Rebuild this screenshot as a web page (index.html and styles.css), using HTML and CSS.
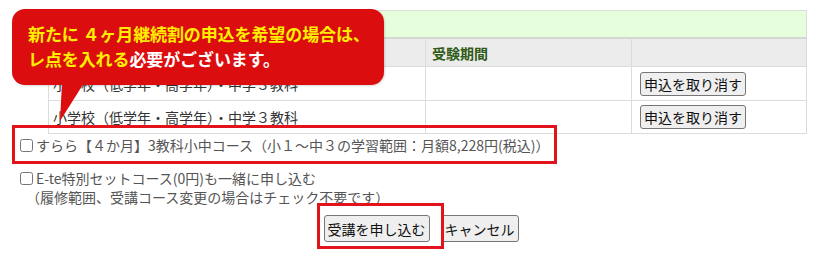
FILE: index.html
```html
<!DOCTYPE html>
<html lang="ja">
<head>
<meta charset="utf-8">
<link rel="stylesheet" href="styles.css">
</head>
<body>
<div class="page">
  <table class="courses">
    <colgroup><col class="c1"><col class="c2"><col class="c3"></colgroup>
    <tr class="r-title"><td colspan="3"></td></tr>
    <tr class="r-head"><th></th><th>受験期間</th><th></th></tr>
    <tr class="r-a"><td>小学校（低学年・高学年）・中学３教科</td><td></td><td><button class="btn">申込を取り消す</button></td></tr>
    <tr class="r-b"><td>小学校（低学年・高学年）・中学３教科</td><td></td><td><button class="btn">申込を取り消す</button></td></tr>
  </table>

  <label class="opt opt1"><input type="checkbox"><span>すらら【４か月】3教科小中コース（小１～中３の学習範囲：月額8,228円(税込)）</span></label>

  <div class="opt2">
    <label class="opt"><input type="checkbox"><span>E-te特別セットコース(0円)も一緒に申し込む</span></label>
    <div class="note">（履修範囲、受講コース変更の場合はチェック不要です）</div>
  </div>

  <div class="actions">
    <button class="btn btn-lg">受講を申し込む</button>
    <button class="btn btn-lg">キャンセル</button>
  </div>

  <div class="mark mark-opt"></div>
  <div class="mark mark-submit"></div>

  <div class="callout">
    <div class="callout-text"><span class="hl">新たに ４ヶ月継続割の申込を希望の場合は、</span><br><span class="hl">レ点を入れる</span>必要がございます。</div>
  </div>
</div>
</body>
</html>
```

FILE: styles.css
```css
html, body {
  margin: 0;
  padding: 0;
  background: #fff;
}
body {
  font-family: "Noto Sans CJK JP", "Noto Sans", sans-serif;
  font-size: 14px;
  color: #333;
}
.page {
  position: relative;
  width: 840px;
  height: 254px;
  padding-top: 10px;
  box-sizing: border-box;
}
.courses {
  margin-left: 48px;
  width: 758px;
  border-collapse: collapse;
  table-layout: fixed;
  border: 1px solid #dcdcdc;
}
.courses col.c1 { width: 377px; }
.courses col.c2 { width: 206px; }
.courses col.c3 { width: 175px; }
.courses td, .courses th {
  border: 1px solid #dcdcdc;
  padding: 0 0 0 6px;
  text-align: left;
  vertical-align: middle;
  line-height: 20px;
}
.courses td:first-child { padding-left: 4px; }
.r-title td {
  background: #e6fedc;
  height: 26px;
  border-bottom: 2px solid #d6d6d6;
}
.r-head th {
  background: #ececec;
  height: 27px;
  color: #2f5a16;
  font-weight: bold;
}
.r-a td { height: 33px; }
.r-b td { height: 32px; }
.courses td:last-child { padding-left: 8px; }

.btn {
  font-family: "Noto Sans CJK JP", "Noto Sans", sans-serif;
  font-size: 14px;
  line-height: 20px;
  color: #111;
  background: #efefef;
  border: 1px solid #767676;
  border-radius: 3px;
  padding: 1px 3px;
  margin: 0;
}

.opt {
  display: flex;
  align-items: center;
  color: #555;
  line-height: 19px;
  margin-left: 16px;
}
.opt input {
  margin: 0 3px 0 4px;
  width: 13px;
  height: 13px;
}
.opt1 {
  margin-top: 2px;
}
.opt2 {
  margin-top: 14px;
}
.note {
  color: #555;
  line-height: 19px;
  margin-left: 26px;
}
.actions {
  display: flex;
  justify-content: center;
  gap: 11px;
  margin-top: 8px;
  padding-left: 2px;
}
.btn-lg {
  padding: 2px 3px;
  height: 27px;
}

.mark {
  position: absolute;
  border: 3px solid #e2131b;
  box-sizing: border-box;
}
.mark-opt {
  left: 12px;
  top: 125px;
  width: 545px;
  height: 39px;
}
.mark-submit {
  left: 317px;
  top: 203px;
  width: 127px;
  height: 46px;
}

.callout {
  position: absolute;
  left: 12px;
  top: 9px;
  width: 372px;
  height: 76px;
  background: #dc0d0e;
  border-radius: 13px;
  box-shadow: 1px 1px 2px rgba(0,0,0,0.15);
}
.callout::after {
  content: "";
  position: absolute;
  left: 48px;
  top: 74px;
  width: 24px;
  height: 38px;
  background: #dc0d0e;
  clip-path: polygon(2px 0, 24px 0, 0 38px);
}
.callout-text {
  padding: 12px 0 0 16px;
  font-size: 17px;
  line-height: 25px;
  font-weight: bold;
  color: #fff;
  white-space: nowrap;
  letter-spacing: -0.1px;
}
.hl {
  color: #ffee00;
}
```
